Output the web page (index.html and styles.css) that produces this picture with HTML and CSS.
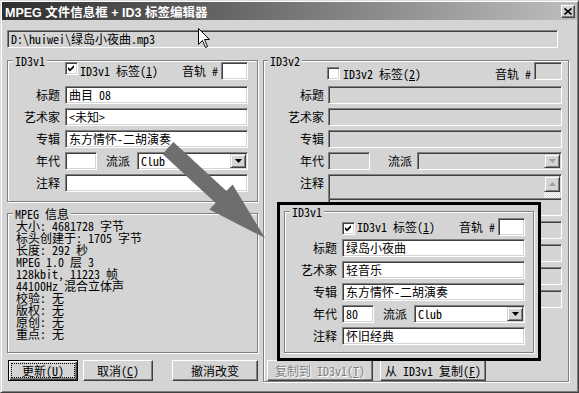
FILE: index.html
```html
<!DOCTYPE html>
<html lang="zh-CN">
<head>
    <meta charset="UTF-8">
    <title>MPEG 文件信息框 + ID3 标签编辑器</title>
    <link rel="stylesheet" href="styles.css">
</head>
<body>
<div class="window">
    <div class="titlebar">
        <span class="title">MPEG 文件信息框 + ID3 标签编辑器</span>
        <span class="close">
            <svg width="8" height="7" viewBox="0 0 8 7"><path d="M0.5 0.5 L7.5 6.5 M7.5 0.5 L0.5 6.5" stroke="#000" stroke-width="1.6"/></svg>
        </span>
    </div>

    <div class="path">D:\huiwei\绿岛小夜曲.mp3</div>

    <div class="columns">
        <!-- columna izquierda -->
        <div class="col-left">
            <div class="group v1">
                <div class="group-title">ID3v1</div>
                <div class="form">
                    <span></span>
                    <div class="check-row">
                        <span class="check"><svg width="7" height="7" viewBox="0 0 7 7"><path d="M0 2 L2 4 L6 0 L6 2.5 L2 6.5 L0 4.5 Z" fill="#000"/></svg></span>
                        <span class="check-label">ID3v1 标签(<u>1</u>)</span>
                        <span class="track-label">音轨 #</span>
                        <span class="field track"></span>
                    </div>
                    <label>标题</label><div class="field">曲目 08</div>
                    <label>艺术家</label><div class="field">&lt;未知&gt;</div>
                    <label>专辑</label><div class="field">东方情怀-二胡演奏</div>
                    <label>年代</label>
                    <div class="year-row">
                        <span class="field year"></span>
                        <span class="genre-label">流派</span>
                        <div class="field select">
                            <span class="select-text">Club</span>
                            <span class="drop"><svg width="7" height="4" viewBox="0 0 7 4"><path d="M0 0 H7 L3.5 4 Z" fill="#000"/></svg></span>
                        </div>
                    </div>
                    <label>注释</label><div class="field"></div>
                </div>
            </div>

            <div class="group info">
                <div class="group-title">MPEG 信息</div>
                <div class="info-text">
                    <div>大小: 4681728 字节</div>
                    <div>标头创建于: 1705 字节</div>
                    <div>长度: 292 秒</div>
                    <div>MPEG 1.0 层 3</div>
                    <div>128kbit, 11223 帧</div>
                    <div>44100Hz 混合立体声</div>
                    <div>校验: 无</div>
                    <div>版权: 无</div>
                    <div>原创: 无</div>
                    <div>重点: 无</div>
                </div>
            </div>

            <div class="buttons">
                <button class="btn default"><span class="focus">更新(<u>U</u>)</span></button>
                <button class="btn">取消(<u>C</u>)</button>
                <button class="btn wide">撤消改变</button>
            </div>
        </div>

        <!-- columna derecha -->
        <div class="col-right">
            <div class="group v2">
                <div class="group-title">ID3v2</div>
                <div class="form">
                    <span></span>
                    <div class="check-row">
                        <span class="check"></span>
                        <span class="check-label">ID3v2 标签(<u>2</u>)</span>
                        <span class="track-label">音轨 #</span>
                        <span class="field off track"></span>
                    </div>
                    <label>标题</label><div class="field off"></div>
                    <label>艺术家</label><div class="field off"></div>
                    <label>专辑</label><div class="field off"></div>
                    <label>年代</label>
                    <div class="year-row">
                        <span class="field off year"></span>
                        <span class="genre-label">流派</span>
                        <div class="field off select">
                            <span class="select-text"></span>
                            <span class="drop"><svg width="7" height="4" viewBox="0 0 7 4"><path d="M0 0 H7 L3.5 4 Z" fill="#a0a0a0"/></svg></span>
                        </div>
                    </div>
                    <label>注释</label>
                    <div class="field off memo">
                        <span class="memo-text"></span>
                        <span class="scrollbar">
                            <span class="arrow"><svg width="7" height="4" viewBox="0 0 7 4"><path d="M0 4 H7 L3.5 0 Z" fill="#a0a0a0"/></svg></span>
                            <span class="scroll-track"></span>
                            <span class="arrow"><svg width="7" height="4" viewBox="0 0 7 4"><path d="M0 0 H7 L3.5 4 Z" fill="#a0a0a0"/></svg></span>
                        </span>
                    </div>
                </div>
                <!-- campos tapados por el recorte -->
                <div class="form extra">
                    <label></label><div class="field off"></div>
                    <label></label><div class="field off"></div>
                    <label></label><div class="field off"></div>
                    <label></label><div class="field off"></div>
                    <label></label><div class="field off"></div>
                </div>
                <div class="buttons inner">
                    <button class="btn copy disabled">复制到 ID3v1(<u>T</u>)</button>
                    <button class="btn copy">从 ID3v1 复制(<u>F</u>)</button>
                </div>
            </div>
        </div>
    </div>

    <!-- recorte superpuesto con los datos ya cargados -->
    <div class="overlay">
        <div class="group v1">
            <div class="group-title">ID3v1</div>
            <div class="form">
                <span></span>
                <div class="check-row">
                    <span class="check"><svg width="7" height="7" viewBox="0 0 7 7"><path d="M0 2 L2 4 L6 0 L6 2.5 L2 6.5 L0 4.5 Z" fill="#000"/></svg></span>
                    <span class="check-label">ID3v1 标签(<u>1</u>)</span>
                    <span class="track-label">音轨 #</span>
                    <span class="field track"></span>
                </div>
                <label>标题</label><div class="field">绿岛小夜曲</div>
                <label>艺术家</label><div class="field">轻音乐</div>
                <label>专辑</label><div class="field">东方情怀-二胡演奏</div>
                <label>年代</label>
                <div class="year-row">
                    <span class="field year">80</span>
                    <span class="genre-label">流派</span>
                    <div class="field select">
                        <span class="select-text">Club</span>
                        <span class="drop"><svg width="7" height="4" viewBox="0 0 7 4"><path d="M0 0 H7 L3.5 4 Z" fill="#000"/></svg></span>
                    </div>
                </div>
                <label>注释</label><div class="field">怀旧经典</div>
            </div>
        </div>
    </div>

    <svg class="big-arrow" width="579" height="393" viewBox="0 0 579 393">
        <polygon points="162.6,153.9 173.4,142.1 226.4,191.1 232.6,184.5 265,238 209.4,209.5 215.6,202.9" fill="#6e6e6e"/>
    </svg>

    <svg class="cursor" width="13" height="21" viewBox="0 0 13 21">
        <path d="M0.5 0.5 L0.5 16.5 L4.5 12.5 L7.5 19.5 L9.5 18.5 L6.5 11.5 L11.5 11.5 Z" fill="#fff" stroke="#000" stroke-width="1"/>
    </svg>
</div>
</body>
</html>
```

FILE: styles.css
```css
/* Ventana general */
body {
    margin: 0;
    background: #d4d4d4;
}

.window {
    position: relative;
    width: 579px;
    height: 393px;
    box-sizing: border-box;
    padding: 1px;
    background: #d4d4d4;
    border: 1px solid;
    border-color: #dcdcdc #404040 #404040 #dcdcdc;
    box-shadow: inset 1px 1px #fff, inset -1px -1px #808080;
    font: 12px "Noto Sans Mono CJK SC", "Liberation Mono", "Noto Sans CJK SC", monospace;
    color: #000;
    overflow: hidden;
}

/* Barra de titulo */
.titlebar {
    display: flex;
    align-items: center;
    height: 18px;
    padding: 0 2px 0 3px;
    background: linear-gradient(to right, #2e2e2e, #bebebe);
}

.title {
    color: #fff;
    font: bold 12.5px "Liberation Sans", "Noto Sans CJK SC", sans-serif;
    white-space: nowrap;
}

.close {
    margin-left: auto;
    width: 14px;
    height: 13px;
    box-sizing: border-box;
    display: flex;
    align-items: center;
    justify-content: center;
    background: #d4d4d4;
    border: 1px solid;
    border-color: #fff #404040 #404040 #fff;
    box-shadow: inset -1px -1px #808080;
}

/* Campos hundidos */
.field,
.path {
    box-sizing: border-box;
    height: 18px;
    padding: 0 3px;
    line-height: 16px;
    background: #fff;
    border: 1px solid;
    border-color: #808080 #fff #fff #808080;
    box-shadow: inset 1px 1px #404040, inset -1px -1px #d4d4d4;
    white-space: nowrap;
    overflow: hidden;
}

.field.off,
.path {
    background: #d4d4d4;
}

.path {
    width: 551px;
    margin: 10px 0 0 5px;
}

/* Columnas */
.columns {
    display: flex;
    gap: 5px;
    margin: 12px 0 0 5px;
}

.col-left {
    width: 251px;
    display: flex;
    flex-direction: column;
}

.col-right {
    width: 306px;
}

/* Marcos de grupo */
.group {
    border: 1px solid #808080;
    box-shadow: inset 1px 1px #fff, 1px 1px #fff;
}

.group-title {
    width: max-content;
    height: 13px;
    line-height: 13px;
    margin: -7px 0 -5px 5px;
    padding: 0 2px;
    background: #d4d4d4;
}

.v2 .group-title {
    margin-left: 4px;
}

.form {
    display: grid;
    grid-template-columns: 50px 183px;
    grid-template-rows: 20px;
    grid-auto-rows: 18px;
    column-gap: 5px;
    row-gap: 4px;
    padding: 0 0 9px 2px;
}

.form label {
    text-align: right;
    line-height: 18px;
    white-space: nowrap;
}

.check-row,
.year-row {
    display: flex;
    align-items: flex-start;
}

.check {
    width: 13px;
    height: 13px;
    box-sizing: border-box;
    display: flex;
    align-items: center;
    justify-content: center;
    background: #fff;
    border: 1px solid;
    border-color: #808080 #fff #fff #808080;
    box-shadow: inset 1px 1px #404040, inset -1px -1px #d4d4d4;
}

.check-label {
    margin-left: 2px;
    line-height: 17px;
}

.track-label {
    margin-left: auto;
    line-height: 17px;
}

.track {
    width: 27px;
    margin-left: 3px;
}

.year {
    width: 32px;
}

.genre-label {
    margin-left: 9px;
    line-height: 18px;
}

.select {
    flex: 1;
    display: flex;
    margin-left: 7px;
    padding: 1px 1px 1px 3px;
}

.select-text {
    flex: 1;
    line-height: 14px;
}

.drop,
.arrow {
    width: 16px;
    box-sizing: border-box;
    display: flex;
    align-items: center;
    justify-content: center;
    background: #d4d4d4;
    border: 1px solid;
    border-color: #d4d4d4 #404040 #404040 #d4d4d4;
    box-shadow: inset 1px 1px #fff, inset -1px -1px #808080;
}

.drop {
    height: 14px;
}

/* ID3v2 */
.v2 {
    height: 322px;
    box-sizing: border-box;
    display: flex;
    flex-direction: column;
}

.v2 .form {
    grid-template-columns: 58px 234px;
    column-gap: 4px;
    padding-bottom: 0;
}

.v2 .check-row .check {
    margin: 5px 0 0 -1px;
}

.v2 .check-row .check-label {
    margin-left: 3px;
    padding-top: 3px;
}

.v2 .check-row .track-label {
    padding-top: 3px;
}

.v2 .track {
    width: 28px;
}

.v2 .year {
    width: 42px;
}

.v2 .genre-label {
    margin-left: 18px;
}

.v2 .select {
    margin-left: 5px;
}

.v2 .form .memo {
    height: 42px;
    display: flex;
    padding: 1px;
}

.memo-text {
    flex: 1;
}

.scrollbar {
    width: 16px;
    display: flex;
    flex-direction: column;
}

.arrow {
    height: 16px;
}

.scroll-track {
    flex: 1;
    background: repeating-conic-gradient(#fff 0 25%, #d4d4d4 0 50%) 0 0 / 2px 2px;
}

.v2 .form:first-of-type {
    grid-template-rows: 20px 18px 18px 18px 18px 42px;
}

.v2 .extra {
    grid-template-rows: none;
    row-gap: 5px;
    margin-top: 6px;
}

/* Informacion MPEG */
.info {
    height: 140px;
    box-sizing: border-box;
    margin-top: 11px;
}

.info-text {
    margin-top: 5px;
    padding-left: 8px;
    line-height: 12px;
    white-space: nowrap;
}

/* Botones */
.buttons {
    display: flex;
    gap: 5px;
    margin-top: 7px;
    padding-left: 1px;
}

.buttons.inner {
    margin-top: auto;
    gap: 7px;
    padding-left: 3px;
}

.btn {
    height: 21px;
    width: 70px;
    box-sizing: border-box;
    display: flex;
    align-items: center;
    justify-content: center;
    padding: 0;
    font: inherit;
    color: #000;
    background: #d4d4d4;
    border: 1px solid;
    border-color: #fff #404040 #404040 #fff;
    box-shadow: inset -1px -1px #808080;
}

.btn.default {
    border-color: #000;
    box-shadow: inset 1px 1px #fff, inset -1px -1px #404040, inset -2px -2px #808080;
}

.focus {
    width: 64px;
    height: 15px;
    box-sizing: border-box;
    display: flex;
    align-items: center;
    justify-content: center;
    border: 1px dotted #000;
}

.btn.wide {
    width: 86px;
    margin-left: auto;
}

.btn.copy {
    width: 106px;
}

.btn.disabled {
    color: #808080;
    text-shadow: 1px 1px #fff;
}

/* Recorte superpuesto */
.overlay {
    position: absolute;
    left: 276px;
    top: 201px;
    width: 264px;
    box-sizing: border-box;
    padding: 6px 4px 5px 4px;
    background: #d4d4d4;
    border: 3px solid #000;
}

.overlay .group-title {
    margin-bottom: -3px;
}

.overlay .form {
    padding-bottom: 7px;
}

.overlay .check-row {
    padding-top: 3px;
}

.overlay .check {
    margin-top: 4px;
}

.big-arrow {
    position: absolute;
    left: -1px;
    top: -1px;
    pointer-events: none;
}

.cursor {
    position: absolute;
    left: 197px;
    top: 27px;
}
```
